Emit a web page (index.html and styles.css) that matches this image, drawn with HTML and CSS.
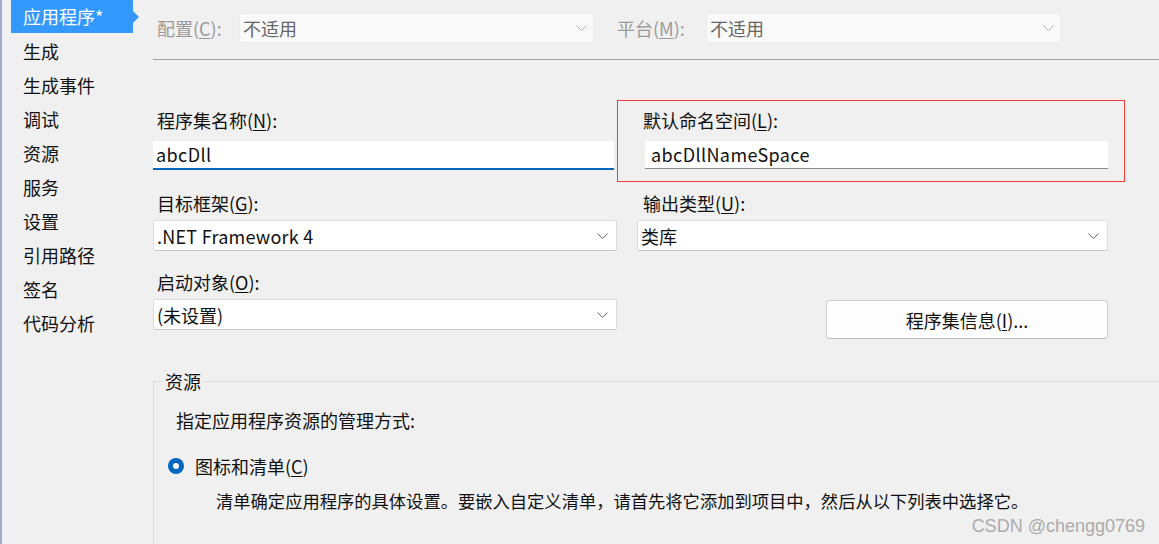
FILE: index.html
```html
<!DOCTYPE html>
<html lang="zh-CN">
<head>
<meta charset="utf-8">
<title>应用程序</title>
<link rel="stylesheet" href="styles.css">
</head>
<body>
<div class="app">
  <nav class="sidebar">
    <div class="item active">应用程序*<span class="arrow"></span></div>
    <div class="item">生成</div>
    <div class="item">生成事件</div>
    <div class="item">调试</div>
    <div class="item">资源</div>
    <div class="item">服务</div>
    <div class="item">设置</div>
    <div class="item">引用路径</div>
    <div class="item">签名</div>
    <div class="item">代码分析</div>
  </nav>
  <main class="main">
    <div class="topbar">
      <span class="top-label lbl-cfg">配置(<u>C</u>):</span>
      <div class="select disabled top-select"><span>不适用</span><svg class="chev" width="11" height="6" viewBox="0 0 11 6"><polyline points="0.5,0.5 5.5,5.5 10.5,0.5" fill="none" stroke="currentColor" stroke-width="1"/></svg></div>
      <span class="top-label lbl-plat">平台(<u>M</u>):</span>
      <div class="select disabled top-select"><span>不适用</span><svg class="chev" width="11" height="6" viewBox="0 0 11 6"><polyline points="0.5,0.5 5.5,5.5 10.5,0.5" fill="none" stroke="currentColor" stroke-width="1"/></svg></div>
    </div>

    <div class="row r1">
      <div class="col-left">
        <div class="label">程序集名称(<u>N</u>):</div>
        <div class="textbox focused">abcDll</div>
      </div>
      <div class="col-right highlight">
        <div class="label rlabel">默认命名空间(<u>L</u>):</div>
        <div class="textbox ns">abcDllNameSpace</div>
      </div>
    </div>

    <div class="row r2">
      <div class="col-left">
        <div class="label">目标框架(<u>G</u>):</div>
        <div class="select wide"><span class="latin">.NET Framework 4</span><svg class="chev" width="11" height="6" viewBox="0 0 11 6"><polyline points="0.5,0.5 5.5,5.5 10.5,0.5" fill="none" stroke="currentColor" stroke-width="1"/></svg></div>
      </div>
      <div class="col-right">
        <div class="label rlabel2">输出类型(<u>U</u>):</div>
        <div class="select out"><span>类库</span><svg class="chev" width="11" height="6" viewBox="0 0 11 6"><polyline points="0.5,0.5 5.5,5.5 10.5,0.5" fill="none" stroke="currentColor" stroke-width="1"/></svg></div>
      </div>
    </div>

    <div class="row r3">
      <div class="col-left">
        <div class="label">启动对象(<u>O</u>):</div>
        <div class="select wide"><span>(未设置)</span><svg class="chev" width="11" height="6" viewBox="0 0 11 6"><polyline points="0.5,0.5 5.5,5.5 10.5,0.5" fill="none" stroke="currentColor" stroke-width="1"/></svg></div>
      </div>
      <div class="col-right btn-cell">
        <button class="btn">程序集信息(<u>I</u>)...</button>
      </div>
    </div>

    <fieldset class="group">
      <legend>资源</legend>
      <div class="desc">指定应用程序资源的管理方式:</div>
      <div class="radio-row">
        <span class="radio"></span>
        <span>图标和清单(<u>C</u>)</span>
      </div>
      <div class="subdesc">清单确定应用程序的具体设置。要嵌入自定义清单，请首先将它添加到项目中，然后从以下列表中选择它。</div>
    </fieldset>
  </main>
</div>
<div class="watermark">CSDN @chengg0769</div>
</body>
</html>
```

FILE: styles.css
```css
html, body {
  margin: 0;
  padding: 0;
  background: #f0f0f0;
  width: 1159px;
  height: 544px;
  overflow: hidden;
}
body {
  font-family: "Noto Sans CJK SC", "Noto Sans", sans-serif;
  font-size: 18px;
  color: #111;
  position: relative;
}
u { text-decoration: underline; text-underline-offset: 2px; text-decoration-thickness: 1px; }

.app {
  display: flex;
  height: 544px;
}

.sidebar {
  flex: none;
  border-left: 2px solid #a3a9cf;
  padding-left: 9px;
  box-sizing: border-box;
  width: 153px;
}
.item {
  height: 34px;
  line-height: 34px;
  padding-left: 12px;
  width: 122px;
  box-sizing: border-box;
  position: relative;
  color: #111;
  white-space: nowrap;
}
.item.active {
  background: #3399ff;
  color: #fff;
  height: 33px;
  line-height: 32px;
  margin-bottom: 1px;
}
.arrow {
  position: absolute;
  right: -6px;
  top: 11px;
  width: 0;
  height: 0;
  border-top: 6px solid transparent;
  border-bottom: 6px solid transparent;
  border-left: 6px solid #3399ff;
}

.main {
  flex: 1;
  min-width: 0;
}

.topbar {
  border-bottom: 1px solid #a0a0a0;
  display: flex;
  align-items: flex-start;
  padding: 13px 0 0 4px;
  box-sizing: content-box;
  height: 46px;
}
.top-label {
  color: #9a9a9a;
  line-height: 30px;
  white-space: nowrap;
}
.lbl-cfg { width: 82px; }
.lbl-plat { width: 89px; margin-left: 23px; }

.select {
  display: flex;
  align-items: center;
  justify-content: space-between;
  background: #fff;
  border: 1px solid #dcdcdc;
  border-bottom-color: #c8c8c8;
  border-radius: 2px;
  box-sizing: border-box;
  padding: 0 8px 0 3px;
  color: #111;
  white-space: nowrap;
}
.select .chev { color: #666; flex: none; }
.select.disabled {
  background: #f9f9f9;
  border-color: #ececec;
  color: #666;
}
.select.disabled .chev { color: #b0b0b0; }
.top-select {
  width: 355px;
  height: 30px;
  padding-right: 6px;
}
.latin { letter-spacing: 0.25px; }

.row {
  display: flex;
  align-items: flex-start;
}
.col-left { width: 464px; flex: none; }
.col-right { width: 508px; flex: none; box-sizing: border-box; }

.label {
  line-height: 24px;
  padding-left: 4px;
  white-space: nowrap;
}

.r1 { margin-top: 40px; }
.r1 .col-left { padding-top: 8px; }
.highlight {
  border: 1px solid #f23c3c;
  height: 82px;
  padding-top: 7px;
}
.rlabel { padding-left: 25px; }
.textbox {
  margin-top: 9px;
  height: 29px;
  background: #fff;
  box-sizing: border-box;
  line-height: 27px;
  padding-left: 3px;
  white-space: nowrap;
  letter-spacing: 0.4px;
}
.textbox.focused {
  width: 461px;
  border-bottom: 2px solid #0067c0;
}
.textbox.ns {
  margin-left: 27px;
  width: 463px;
  height: 28px;
  border-bottom: 1px solid #8a8a8a;
  padding-left: 6px;
}

.r2 { margin-top: 9px; }
.r2 .select, .r3 .select { margin-top: 5px; height: 31px; }
.wide { width: 464px; }
.rlabel2 { padding-left: 26px; }
.out { width: 471px; margin-left: 20px; }

.r3 { margin-top: 19px; }
.btn-cell { padding-top: 30px; }
.btn {
  margin-left: 209px;
  width: 282px;
  height: 39px;
  background: #fdfdfd;
  border: 1px solid #d0d0d0;
  border-bottom-color: #bdbdbd;
  border-radius: 4px;
  font: inherit;
  color: #111;
  padding: 0;
}

.group {
  margin: 30px 0 0 0;
  border: none;
  border-top: 1px solid #dcdcdc;
  border-left: 1px solid #dcdcdc;
  padding: 15px 0 40px 14px;
  min-width: 0;
}
.group legend {
  margin-left: -5px;
  padding: 0 2px;
  line-height: 24px;
}
.desc {
  line-height: 24px;
  padding-left: 8px;
}
.radio-row {
  margin-top: 22px;
  display: flex;
  align-items: center;
  line-height: 24px;
}
.radio {
  width: 16px;
  height: 16px;
  border-radius: 50%;
  background: #0067c0;
  position: relative;
  margin-right: 11px;
  flex: none;
}
.radio::after {
  content: "";
  position: absolute;
  left: 5px;
  top: 5px;
  width: 6px;
  height: 6px;
  border-radius: 50%;
  background: #fff;
}
.subdesc {
  margin-top: 11px;
  margin-left: 48px;
  line-height: 24px;
  white-space: nowrap;
  font-size: 17.3px;
}

.watermark {
  position: absolute;
  right: 14px;
  bottom: 8px;
  font-family: "Liberation Sans", sans-serif;
  font-size: 18px;
  color: #ababab;
  line-height: 20px;
}
```
